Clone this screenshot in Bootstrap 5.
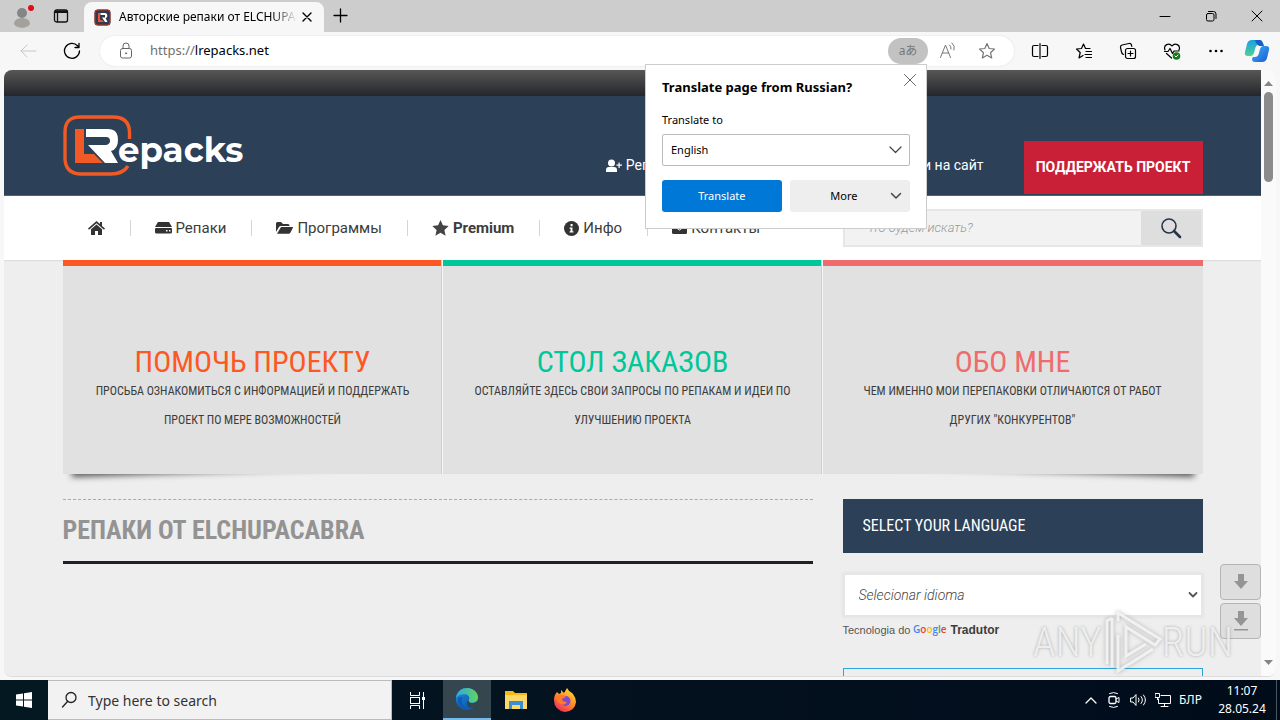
<!DOCTYPE html>
<html lang="ru">
<head>
<meta charset="utf-8">
<meta name="viewport" content="width=device-width, initial-scale=1">
<title>Авторские репаки от ELCHUPACABRA</title>
<link href="https://cdn.jsdelivr.net/npm/bootstrap@5.3.0/dist/css/bootstrap.min.css" rel="stylesheet">
<style>
:root { --navy: #2c4058; --cond: "Roboto Condensed", "Liberation Sans Narrow", Roboto, sans-serif; --ui: "Noto Sans", "Open Sans", sans-serif; }
body { font-family: var(--ui); font-size: 12px; color: #000; background: #f7f7f7; overflow: hidden; }
svg { display: block; flex: none; }
button { border: 0; background: none; padding: 0; color: inherit; }
a { color: inherit; text-decoration: none; }
.ln { fill: none; stroke: currentColor; stroke-width: 1; stroke-linecap: round; stroke-linejoin: round; }

.tabstrip { height: 32px; background: #cdcdcd; flex: none; }
.tabtool { width: 38px; }
.browser-tab { width: 240px; height: 30px; background: #f7f7f7; border-radius: 8px 8px 0 0; padding: 0 10px; }
.tab-title { width: 178px; white-space: nowrap; line-height: 28px; -webkit-mask-image: linear-gradient(90deg, #000 86%, transparent); mask-image: linear-gradient(90deg, #000 86%, transparent); }
.winbtn { width: 46px; height: 32px; }
.toolbar { height: 38px; padding-right: 4px; flex: none; }
.toolbtn { width: 44px; height: 36px; }
.nav-gap { margin-right: 6px; }
.addr { height: 30px; border-radius: 15px; background: #fff; box-shadow: 0 0 2px #ddd; padding-left: 18px; margin-left: 6px; }
.addr-text { font-size: 13px; color: #000; }
.addr-text span { color: #6f6f6f; }
.pill { width: 40px; height: 26px; border-radius: 13px; background: #c2c2c2; color: #777; font-size: 12px; line-height: 24px; font-family: "Noto Sans", "Noto Sans CJK JP", sans-serif; }
.addrbtn { width: 39px; color: #777; }

.viewport { margin: 0 4px 3px; border-radius: 8px; overflow: hidden; background: #eee; border-bottom: 1px solid #ddd; min-height: 0; }
.site { min-width: 0; overflow: hidden; font-family: Roboto, sans-serif; }
.wrap { max-width: 1140px; width: 100%; margin: 0 auto; }
.topline { height: 26px; background: linear-gradient(#575757, #25262c); }
.site-head { height: 100px; background: var(--navy); border-bottom: 1px solid #50607a; color: #fff; font-size: 14px; }
.account { gap: 182px; padding-top: 40px; margin-right: 40px; }
.donate { width: 179px; height: 53px; background: #c92037; font-weight: 700; font-size: 14px; margin-bottom: 1px; }
.site-nav { height: 64px; background: #fff; color: #3c3c3c; font-size: 15px; box-shadow: 0 1px 1px #ddd; }
.site-nav li { padding: 0 25px; position: relative; }
.site-nav li + li::before { content: ""; position: absolute; left: 0; top: 4px; height: 16px; width: 1px; background: #d4d4d4; }
.site-nav a { gap: 4px; line-height: 24px; }
.find { width: 360px; height: 38px; border: 2px solid #e6e6e6; background: #f2f2f2; }
.find input { border: 0; outline: 0; background: none; padding-left: 20px; font-style: italic; font-weight: 300; font-size: 13px; min-width: 0; }
.find input::placeholder { color: #999; opacity: 1; }
.find button { width: 60px; background: #dedede; color: #26344a; }

.promo { position: relative; isolation: isolate; }
.promo::before, .promo::after { content: ""; position: absolute; z-index: -1; bottom: 15px; width: 40%; height: 30px; box-shadow: 0 10px 6px #555; transform: rotate(-2deg); left: 8px; }
.promo::after { left: auto; right: 8px; transform: rotate(2deg); }
.tile { flex: 1 1 0; height: 214px; border-top: 6px solid; background: #e1e1e1; padding-top: 77px; font-family: var(--cond); text-align: center; text-transform: uppercase; }
.tile + .tile { box-shadow: -1px 0 #f5f5f5, -2px 0 #cfcfcf; }
.tile h2 { font-size: 30px; line-height: 38px; font-weight: 400; margin: 0; }
.tile p { font-size: 12px; line-height: 29px; color: #3c3c3c; margin: -4px 0 0; }
.c-orange { color: #fd5722; } .c-green { color: #00c79a; } .c-coral { color: #ee6c6c; }
.columns { gap: 30px; padding-top: 25px; }
.feed { border-top: 1px dashed #aaa; }
.feed h1 { font-family: var(--cond); font-size: 26px; line-height: 61px; font-weight: 700; color: #939393; border-bottom: 3px solid #211f26; margin: 0; }
.aside { width: 360px; }
.aside h2 { background: var(--navy); color: #fff; font-family: var(--cond); font-weight: 400; font-size: 16px; line-height: 54px; padding: 0 20px; margin: 0 0 20px; }
.lang { position: relative; }
.lang select { appearance: none; width: 100%; height: 44px; border: 2px solid #e6e6e6; background: #fff; box-shadow: 0 0 3px #ddd; font-style: italic; font-weight: 300; font-size: 14px; color: #444; padding: 0 14px; }
.lang svg { position: absolute; right: 5px; top: 18px; pointer-events: none; color: #555; }
.tech { font-size: 11px; line-height: 26px; color: #555; font-family: "Liberation Sans", sans-serif; }
.tech b { font-size: 12px; color: #3c3c3c; }
.bluebox { border: 1px solid #2ba6d6; height: 90px; margin-top: 25px; }
.scroller { width: 15px; background: #fafafa; padding: 8px 0 8px; color: #858585; }
.thumb { width: 9px; height: 90px; border-radius: 5px; background: #8b8b8b; margin-top: 4px; }
.jumps { position: absolute; right: 19px; bottom: 81px; gap: 3px; }
.jumps button { width: 41px; height: 36px; background: #dedede; border: 1px solid #b5b5b5; border-radius: 4px; color: #959595; }

.translate { position: absolute; right: 353px; top: 64px; width: 282px; height: 165px; background: #fff; border: 1px solid #ccc; padding: 13px 16px; z-index: 5; font-size: 11px; }
.translate h2 { font-size: 13px; line-height: 18px; font-weight: 700; margin: 0 0 16px; }
.translate label { line-height: 16px; margin-bottom: 6px; display: block; }
.translate .close-x { position: absolute; right: 10px; top: 9px; color: #666; }
.pick { position: relative; margin-bottom: 14px; }
.pick select { appearance: none; display: block; width: 100%; height: 32px; border: 1px solid #bbb; border-radius: 2px; background: #fff; padding: 0 8px; }
.pick svg, .more svg { position: absolute; right: 8px; top: 12px; pointer-events: none; color: #444; }
.translate .act { height: 32px; border-radius: 3px; width: 50%; }
.blue { background: #0078d7; color: #fff; }
.more { background: #eee; position: relative; padding-right: 12px; }

.anyrun { position: absolute; right: 47px; bottom: 44px; z-index: 6; pointer-events: none; color: rgba(250,250,250,.8); font-family: var(--cond); font-weight: 300; font-size: 41px; line-height: 68px; text-shadow: 0 0 3px rgba(120,120,120,.6); }
.anyrun svg { filter: drop-shadow(0 0 2px rgba(120,120,120,.6)); }

.taskbar { height: 40px; flex: none; background: linear-gradient(90deg, #031821, #03101e 60%, #010c1b); color: #fff; }
.start { width: 48px; }
.tsearch { width: 344px; background: #f2f2f2; border: 1px solid #bbb; border-left: 0; padding-left: 13px; gap: 9px; color: #222; }
.tsearch input { border: 0; outline: 0; background: none; font-size: 14px; min-width: 0; }
.tsearch input::placeholder { color: #333; opacity: 1; }
.task { width: 49px; }
.task.wide { width: 51px; }
.task.on { width: 48px; background: #36464f; border-bottom: 2px solid #76b9ed; }
.tray { gap: 8px; }
.clock { width: 64px; line-height: 18px; text-align: center; font-size: 12px; }
.peek { width: 4px; border-left: 1px solid #4a5460; margin-left: 2px; }
</style>
</head>
<body class="vh-100 d-flex flex-column position-relative">

<header class="tabstrip d-flex align-items-end">
  <button class="tabtool h-100 d-flex align-items-center justify-content-center ps-2" aria-label="Profile">
    <svg width="26" height="28" viewBox="0 0 26 28"><circle cx="12" cy="11" r="5" fill="#858585"/><path d="M4 22c0-8 16-8 16 0-3 5-13 5-16 0z" fill="#a4a09c"/><circle cx="21" cy="6" r="3" fill="#e30b17"/></svg>
  </button>
  <button class="tabtool h-100 d-flex align-items-center justify-content-center ps-2 me-2" aria-label="Tab actions">
    <svg width="16" height="16" viewBox="0 0 16 16"><rect x="1.500" y="2" width="13" height="12" rx="2" fill="none" stroke="#111" stroke-width="1.300"/><path d="M4.500 5v9" stroke="#111" stroke-width="1.300" fill="none"/><path d="M2 2.500h12v2.500H2z" fill="#111"/></svg>
  </button>
  <div class="browser-tab d-flex align-items-center">
    <svg class="me-2" width="17" height="17" viewBox="0 0 17 17"><rect width="16" height="16" x=".5" y=".5" rx="3" fill="#33384e"/><rect x="1" y="1" width="15" height="15" rx="3" fill="none" stroke="#a5392e"/><path d="M4 4h2v7h2l2 2H4z" fill="#f0542b"/><path d="M6.500 4H11c3 0 3 5 .5 5l2 4H11L8 8.500h3V6H6.500z" fill="#fff"/></svg>
    <div class="tab-title">Авторские репаки от ELCHUPAC</div>
    <button class="ms-1" aria-label="Close tab"><svg width="12" height="12" class="ln"><path d="M2 2l8 8M10 2l-8 8" stroke-width="1.400"/></svg></button>
  </div>
  <button class="h-100 px-2" aria-label="New tab"><svg width="18" height="18" class="ln"><path d="M8.500 2v13M2 8.500h13" stroke-width="1.300"/></svg></button>
  <div class="ms-auto d-flex">
    <button class="winbtn d-flex align-items-center justify-content-center" aria-label="Minimise"><svg width="12" height="12" class="ln"><path d="M1 6.500h10"/></svg></button>
    <button class="winbtn d-flex align-items-center justify-content-center" aria-label="Restore"><svg width="12" height="12" class="ln"><rect x="1.500" y="3.500" width="7.500" height="7.500" rx="1.500"/><path d="M3.500 1.500h5q2.500 0 2.500 2.500v4.500"/></svg></button>
    <button class="winbtn d-flex align-items-center justify-content-center" aria-label="Close"><svg width="12" height="12" class="ln"><path d="M1 1l10 10M11 1L1 11"/></svg></button>
  </div>
</header>

<div class="toolbar d-flex align-items-center">
  <button class="toolbtn d-flex align-items-center justify-content-center ps-2" aria-label="Back"><svg width="18" height="16" class="ln ms-1" style="color:#c8c8c8"><path d="M17 8H2M8 2L2 8l6 6"/></svg></button>
  <button class="toolbtn nav-gap d-flex align-items-center justify-content-center ps-2" aria-label="Refresh"><svg width="18" height="18" class="ln ms-1"><path d="M16.500 9a7.500 7.500 0 1 1-2-5.300L16 5.500M16 1.500v4h-4" stroke-width="1.300"/></svg></button>
  <div class="addr d-flex align-items-center flex-grow-1">
    <svg width="16" height="18" class="ln me-3" style="color:#666"><rect x="2.500" y="6.500" width="11" height="9.500" rx="2"/><path d="M5 6.500V4a3 3 0 0 1 6 0v2.500"/><circle cx="8" cy="11.300" r=".6"/></svg>
    <div class="addr-text flex-grow-1" role="textbox" aria-label="Address"><span>https://</span>lrepacks.net</div>
    <button class="pill" aria-label="Translate">aあ</button>
    <button class="addrbtn d-flex justify-content-center" aria-label="Read aloud"><svg width="18" height="18" class="ln"><path d="M1.500 15.500L6.500 3l5 12.500M3.300 11h6.500M10.500 3q2 1.500 1.500 4M13 1q3.500 3 2 7"/></svg></button>
    <button class="addrbtn d-flex justify-content-center me-2" aria-label="Favourite"><svg width="18" height="18" class="ln"><path d="M9 1.500l2.200 5 5.300.5-4 3.700 1.200 5.300L9 13.300 4.300 16l1.200-5.300-4-3.700 5.300-.5z" stroke-width="1.200"/></svg></button>
  </div>
  <div class="d-flex ms-1">
    <button class="toolbtn d-flex align-items-center justify-content-center" aria-label="Split screen"><svg width="18" height="18" class="ln"><path d="M7 3.500H3a1.500 1.500 0 0 0-1.500 1.500v8A1.500 1.500 0 0 0 3 14.500h4M11 3.500h4a1.500 1.500 0 0 1 1.500 1.500v8a1.500 1.500 0 0 1-1.500 1.500h-4M9 1.500v15" stroke-width="1.200"/></svg></button>
    <button class="toolbtn d-flex align-items-center justify-content-center" aria-label="Favourites"><svg width="18" height="18" class="ln"><path d="M15 6.500h-4.500L8.500 2l-2 4.500L1.500 7l3.700 3.500L4 16l4-2.500M11 9.500h5.500M10 12.500h6.500M11 15.500h5.500" stroke-width="1.200"/></svg></button>
    <button class="toolbtn d-flex align-items-center justify-content-center" aria-label="Collections"><svg width="18" height="18" class="ln"><rect x="6.500" y="6.500" width="10" height="10" rx="2" stroke-width="1.200"/><path d="M11.500 9v5M9 11.500h5M4.500 12.500Q3 12 2.500 10L1.500 5.500Q1.200 3.500 3 3l7-1.500q2-.3 2.500 1.500l.3 1.500" stroke-width="1.200"/></svg></button>
    <button class="toolbtn d-flex align-items-center justify-content-center" aria-label="Browser essentials"><svg width="18" height="18" class="ln"><path d="M2 8C0 3 6 0 9 4c3-4 9-1 7 4M1.500 9.500H5l2-3 2.500 5 1.500-2.500h5M3.500 11.500L8.500 16" stroke-width="1.200"/><circle cx="13.500" cy="14" r="3.800" fill="#157c1b" stroke="none"/><path d="M12 14l1 1 2-2" stroke="#fff"/></svg></button>
    <button class="toolbtn d-flex align-items-center justify-content-center" aria-label="More"><svg width="16" height="4"><circle cx="2.500" cy="2" r="1.300"/><circle cx="8" cy="2" r="1.300"/><circle cx="13.500" cy="2" r="1.300"/></svg></button>
    <button class="toolbtn d-flex align-items-center justify-content-center" aria-label="Copilot" style="width:38px"><svg width="26" height="24" viewBox="0 0 26 24"><defs><linearGradient id="cp1" x2="0" y2="1"><stop stop-color="#1c9ee8"/><stop offset="1" stop-color="#4fd38c"/></linearGradient><linearGradient id="cp2" x2="1" y2="1"><stop stop-color="#38b6f5"/><stop offset="1" stop-color="#1d57d6"/></linearGradient></defs><path d="M8 1h7q3 0 3 3l-1 2h-3q-2 0-3 4l-1 4q-1 3-3 3H4q-4 0-3-4l2-8q1-4 5-4z" fill="url(#cp1)"/><path d="M18 23h-7q-3 0-3-3l1-2h2q3 0 4-4l1-4q1-3 3-3h3q4 0 3 4l-2 8q-1 4-5 4z" fill="url(#cp2)"/><path d="M11 1h5q2 0 3 3l1 3h-5l-3-3z" fill="#1560c2"/></svg></button>
  </div>
</div>

<main class="viewport d-flex flex-grow-1">
  <div class="site flex-grow-1">
    <div class="topline"></div>
    <div class="site-head">
      <div class="wrap h-100 d-flex align-items-end">
        <a href="#" class="align-self-center" aria-label="LRepacks">
          <svg width="190" height="62" viewBox="0 0 190 62"><path d="M66.500 24V17Q66 2 50 2H17Q2 2 2 17v26q0 15 15 16h31q12 0 17-8" fill="none" stroke="#f15a24" stroke-width="3.400"/><path d="M12 14h9v25h10l9 9H12z" fill="#f15a24"/><path d="M23 14h22q10 0 10 11 0 9-7 11l7 12H42L25 30h18q4-1 4-4 0-4-4-4H23z" fill="#fff"/><text x="55" y="47" font-family="Montserrat, Lato, sans-serif" font-weight="700" font-size="34" fill="#fff">epacks</text></svg>
        </a>
        <nav class="account ms-auto d-flex align-self-stretch align-items-center" aria-label="Аккаунт">
          <a href="#" class="d-flex align-items-center"><svg class="me-1" width="16" height="14" viewBox="0 0 16 14" fill="#fff"><circle cx="5.500" cy="4" r="3.500"/><path d="M0 13V11q0-3 3-3h5q3 0 3 3v2zM12.500 3.500h1.200v2H16v1.300h-2.300V9h-1.200V6.800h-2V5.500h2z"/></svg>Регистрация</a>
          <a href="#">Войти на сайт</a>
        </nav>
        <button class="donate">ПОДДЕРЖАТЬ ПРОЕКТ</button>
      </div>
    </div>
    <nav class="site-nav d-flex" aria-label="Меню">
      <div class="wrap d-flex align-items-center">
        <ul class="list-unstyled d-flex m-0">
          <li><a href="#" class="d-flex align-items-center" aria-label="Главная"><svg width="17" height="24" viewBox="0 0 17 16" fill="#333"><path d="M8.500 1L0 8.500l1 1.200 7.500-6.500 7.500 6.500 1-1.200-3-2.600V2h-2v2z"/><path d="M8.500 4.500L3 9.300V15h4v-4h3v4h4V9.300z"/></svg></a></li>
          <li><a href="#" class="d-flex align-items-center"><svg width="17" height="12" viewBox="0 0 17 12" fill="#333"><path d="M3 0h11l3 5H0z"/><path d="M1 6h15q1 0 1 1v3q0 1.500-1.500 1.500h-14Q0 11.500 0 10V7q0-1 1-1zm10 2v1.500h1.500V8zm3 0v1.500h1.500V8z" fill-rule="evenodd"/></svg>Репаки</a></li>
          <li><a href="#" class="d-flex align-items-center"><svg width="17" height="12" viewBox="0 0 17 12" fill="#333"><path d="M0 10V1.500Q0 0 1.500 0H5l2 2h5q1.500 0 1.500 1.500V4H5Q3.700 4 3 5z"/><path d="M5 5h11.500q.8 0 .4.800l-2.700 5.200q-.5.800-1.500.8H1z"/></svg>Программы</a></li>
          <li><a href="#" class="d-flex align-items-center fw-bold"><svg width="17" height="16" viewBox="0 0 17 16" fill="#444"><path d="M8.500 0l2.400 5.300 5.800.6-4.300 4 1.200 5.800-5.100-3-5.100 3 1.200-5.800-4.300-4 5.800-.6z"/></svg>Premium</a></li>
          <li><a href="#" class="d-flex align-items-center"><svg width="15" height="15" viewBox="0 0 16 16"><circle cx="8" cy="8" r="8" fill="#333"/><path d="M6 7h3v4h1v1.300H6V11h1V8.300H6zM7 3.300h2.200v2.200H7z" fill="#fff"/></svg>Инфо</a></li>
          <li><a href="#" class="d-flex align-items-center"><svg width="15" height="12" viewBox="0 0 15 12"><rect width="15" height="12" rx="1.500" fill="#333"/><path d="M0 3l7.500 5L15 3" fill="none" stroke="#fff"/></svg>Контакты</a></li>
        </ul>
        <form class="find d-flex ms-auto">
          <input type="search" class="flex-grow-1" aria-label="Поиск" placeholder="Что будем искать?">
          <button type="button" class="d-flex align-items-center justify-content-center" aria-label="Найти"><svg width="22" height="22" class="ln"><circle cx="9" cy="9" r="7" stroke-width="1.600"/><path d="M14 14l6 6" stroke-width="2.600"/></svg></button>
        </form>
      </div>
    </nav>
    <div class="wrap">
      <section class="promo">
        <div class="d-flex">
          <a href="#" class="tile c-orange"><h2>Помочь проекту</h2><p>Просьба ознакомиться с информацией и поддержать<br>проект по мере возможностей</p></a>
          <a href="#" class="tile c-green"><h2>Стол заказов</h2><p>Оставляйте здесь свои запросы по репакам и идеи по<br>улучшению проекта</p></a>
          <a href="#" class="tile c-coral"><h2>Обо мне</h2><p>Чем именно мои перепаковки отличаются от работ<br>других "конкурентов"</p></a>
        </div>
      </section>
      <div class="columns d-flex align-items-start">
        <section class="feed flex-grow-1"><h1>РЕПАКИ ОТ ELCHUPACABRA</h1></section>
        <aside class="aside flex-shrink-0">
          <h2>SELECT YOUR LANGUAGE</h2>
          <div class="lang">
            <select aria-label="Selecionar idioma"><option>Selecionar idioma</option></select>
            <svg width="10" height="8" class="ln"><path d="M1.500 2L5 5.500 8.500 2" stroke-width="1.800"/></svg>
          </div>
          <div class="tech">Tecnologia do <svg class="d-inline-block align-baseline" width="34" height="10" overflow="visible" aria-label="Google"><text y="9" font-family="Open Sans, sans-serif" font-size="10" font-weight="600"><tspan fill="#4285f4">G</tspan><tspan fill="#ea4335">o</tspan><tspan fill="#fbbc05">o</tspan><tspan fill="#4285f4">g</tspan><tspan fill="#34a853">l</tspan><tspan fill="#ea4335">e</tspan></text></svg> <b>Tradutor</b></div>
          <div class="bluebox"></div>
        </aside>
      </div>
    </div>
  </div>
  <div class="scroller d-flex flex-column align-items-center" aria-hidden="true">
    <svg width="9" height="10"><path d="M0 8l4.500-5L9 8z" fill="currentColor"/></svg>
    <div class="thumb"></div>
    <svg class="mt-auto" width="9" height="10"><path d="M0 2l4.500 5L9 2z" fill="currentColor"/></svg>
  </div>
</main>

<div class="jumps d-flex flex-column">
  <button class="d-flex align-items-center justify-content-center" aria-label="Page down"><svg width="14" height="18" fill="currentColor"><path d="M4 1h6v7h4l-7 8-7-8h4z"/></svg></button>
  <button class="d-flex align-items-center justify-content-center" aria-label="Page end"><svg width="14" height="20" fill="currentColor"><path d="M4 0h6v7h4l-7 8-7-8h4zM0 18h14v1.500H0z"/></svg></button>
</div>

<div class="translate" role="dialog" aria-label="Translate">
  <button class="close-x" aria-label="Close"><svg width="12" height="12" class="ln"><path d="M.5.500l11 11M11.500.500l-11 11"/></svg></button>
  <h2>Translate page from Russian?</h2>
  <label for="to">Translate to</label>
  <div class="pick"><select id="to"><option>English</option></select><svg width="13" height="8" class="ln"><path d="M1 1l5.500 5.500L12 1" stroke-width="1.200"/></svg></div>
  <div class="d-flex gap-2">
    <button class="act blue">Translate</button>
    <button class="act more">More<svg width="12" height="8" class="ln"><path d="M1.500 1.500L6 6l4.500-4.500" stroke-width="1.500"/></svg></button>
  </div>
</div>

<div class="anyrun d-flex align-items-center" aria-label="ANY.RUN">ANY<svg width="60" height="62" viewBox="0 0 60 62" fill="none" stroke="#f7f7f7" stroke-opacity=".85" stroke-width="3"><path d="M5 53V10l5-3M10 7v49"/><path d="M16 10V2l42 26-5 6-29-18v29l20-12"/><path d="M16 24v36l35-22"/></svg>RUN</div>

<footer class="taskbar d-flex">
  <button class="start d-flex align-items-center justify-content-center" aria-label="Start"><svg width="16" height="16" fill="#fff"><path d="M0 2.500l7-1v6H0zM8 1.300L16 0v7.500H8zM0 8.500h7v6l-7-1zM8 8.500h8V16l-8-1.300z"/></svg></button>
  <div class="tsearch d-flex align-items-center"><svg width="16" height="18" class="ln"><circle cx="10" cy="6.500" r="5" stroke-width="1.300"/><path d="M6.500 10.500L1.500 16" stroke-width="1.300"/></svg><input class="flex-grow-1" type="text" aria-label="Search" placeholder="Type here to search"></div>
  <button class="task wide d-flex align-items-center justify-content-center" aria-label="Task view"><svg width="17" height="17" fill="none" stroke="#fff"><path d="M1.500 0v3.500h9V0M1.500 17v-3.500h9V17M14.500 0v17"/><rect x="1.500" y="5.500" width="9" height="6"/><path d="M13 5h3v3h-3z" fill="#fff" stroke="none"/></svg></button>
  <button class="task on d-flex align-items-center justify-content-center" aria-label="Edge"><svg width="24" height="24" viewBox="0 0 26 26"><defs><linearGradient id="eg1"><stop stop-color="#2fa7e8"/><stop offset="1" stop-color="#5fd65a"/></linearGradient><linearGradient id="eg2" x2="1" y2="1"><stop stop-color="#1b8fdf"/><stop offset="1" stop-color="#0b4a9c"/></linearGradient></defs><circle cx="13" cy="13" r="12" fill="url(#eg2)"/><path d="M1 12C2 4 8 1 13 1c8 0 12 6 12 10 0 5-4 6-7 6-3 0-4-1-3-3 2-5-3-7-7-6-3 0-6 2-7 4z" fill="url(#eg1)"/><path d="M15 14c-1 3 3 5 10 2l1 3-3 4c-1-1-4 0-5-.500-5-.5-7-5.500-3-8.500z" fill="#36464f"/><path d="M8 12c-2 6 3 13 12 10-6 6-18 2-17-8 0-3 3-4 5-2z" fill="#0d5cb8"/></svg></button>
  <button class="task d-flex align-items-center justify-content-center" aria-label="Explorer"><svg width="22" height="20"><path d="M0 1h8l2 2h12v16H0z" fill="#f7b916"/><path d="M0 5h22v14H0z" fill="#fdd868"/><path d="M4 19v-8h14v8h-3v-4H7v4z" fill="#3a8fd0"/></svg></button>
  <button class="task d-flex align-items-center justify-content-center" aria-label="Firefox"><svg width="24" height="24" viewBox="0 0 24 24"><defs><linearGradient id="ff" x1=".8" x2=".2" y2="1"><stop stop-color="#ffe03a"/><stop offset=".5" stop-color="#ff8a26"/><stop offset="1" stop-color="#ef2160"/></linearGradient></defs><path d="M4 4l2 2 2-1V2l3 3q2-3 3-5 2 4 5 5l1 1q3 4 3 8-1 9-11 10Q1 22 1 12q0-5 3-8z" fill="url(#ff)"/><circle cx="12.500" cy="13" r="5" fill="#7a4bd8"/><path d="M4 8q5-3 9 1l-4 2q0 3 5 3-3 5-8 1-3-3-2-7z" fill="#ff7a2a"/></svg></button>
  <div class="tray ms-auto d-flex align-items-center">
    <svg width="14" height="10" class="ln"><path d="M2 8l5-5 5 5" stroke-width="1.300"/></svg>
    <svg width="16" height="18" class="ln"><rect x="3" y="5.500" width="7" height="7" rx="1.500" stroke-width="1.300"/><path d="M10 8l3-1.500v5L10 10M3.500 2.500q4-2 8 0M3.500 15.500q4 2 8 0"/></svg>
    <svg width="17" height="14" class="ln"><path d="M1 5h2l3-3.500v11L3 9H1zM8.500 5q1.500 2 0 4M11 3.500q3 3.500 0 7M13.500 2q4 5 0 10"/></svg>
    <svg width="16" height="14" class="ln"><path d="M6 2.500h9.500v8H3.500V6M6 13.500h7M9.500 10.500v3M.5.500h4v4h-4zM2.500 4.500v2"/></svg>
    <span>БЛР</span>
    <div class="clock">11:07<br>28.05.24</div>
  </div>
  <div class="peek"></div>
</footer>

<script src="https://cdn.jsdelivr.net/npm/bootstrap@5.3.0/dist/js/bootstrap.bundle.min.js"></script>
</body>
</html>
